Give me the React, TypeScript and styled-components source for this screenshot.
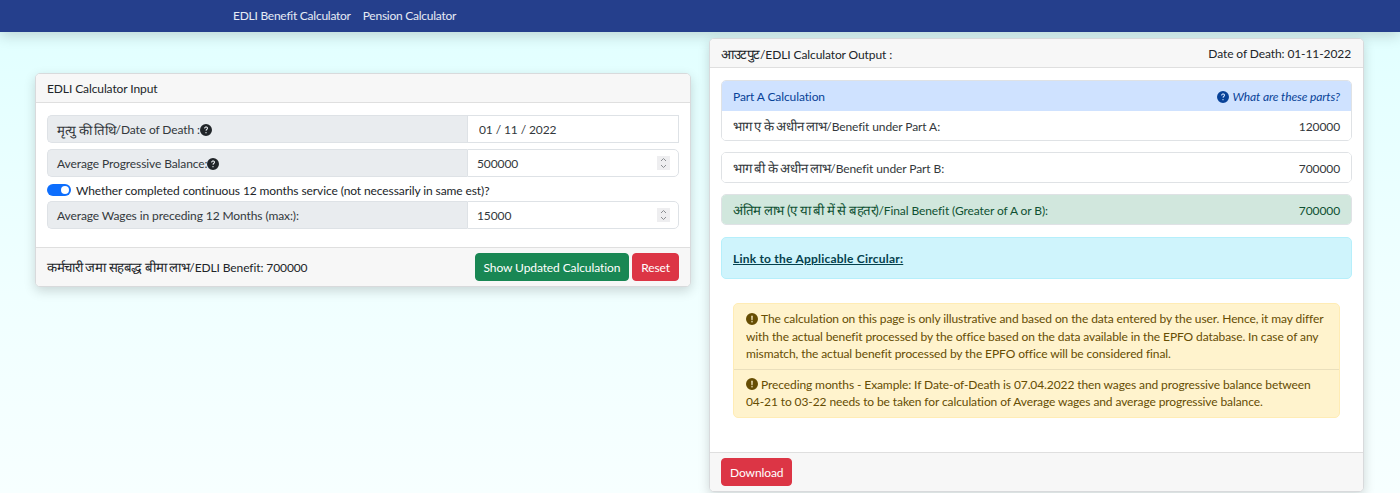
import styled, { createGlobalStyle } from 'styled-components';

const GlobalStyle = createGlobalStyle`
  html, body { margin: 0; padding: 0; }
  body {
    height: 493px;
    overflow: hidden;
    background: linear-gradient(180deg, #e0ffff 0%, #f0ffff 60%, #f7ffff 100%);
    font-family: Lato, Roboto, sans-serif;
    font-size: 12px;
    letter-spacing: -0.1px;
    color: #212529;
  }
  * { box-sizing: border-box; }
`;

const Nav = styled.nav`
  height: 32px;
  background: #253f8c;
  box-shadow: 0 4px 14px rgba(0, 0, 0, 0.16);
  display: flex;
  align-items: center;
  gap: 12px;
  padding: 0 0 1px 233px;
`;

const NavLink = styled.a`
  color: #e6ebf5;
  letter-spacing: -0.25px;
`;

const Columns = styled.main`
  display: grid;
  grid-template-columns: 656px 655px;
  gap: 18px;
  padding: 6px 36px 0 35px;
  align-items: start;
`;

const Card = styled.section<{ $top?: number }>`
  margin-top: ${(p) => p.$top ?? 0}px;
  background: #fff;
  border: 1px solid #d8dadc;
  border-radius: 5px;
  box-shadow: 0 4px 12px rgba(0, 0, 0, 0.16);
  overflow: hidden;
`;

const CardHeader = styled.header`
  height: 29px;
  background: #f7f7f7;
  border-bottom: 1px solid #dfdfdf;
  display: flex;
  align-items: center;
  justify-content: space-between;
  padding: 1px 12px 0 11px;
`;

const InputBody = styled.div`
  padding: 12px 11px 18px;
  display: flex;
  flex-direction: column;
`;

const InputGroup = styled.div<{ $gap?: number }>`
  display: grid;
  grid-template-columns: 420px 1fr;
  height: 28px;
  margin-bottom: ${(p) => p.$gap ?? 0}px;
`;

const GroupLabel = styled.label`
  background: #e9ecef;
  border: 1px solid #dee2e6;
  border-right: none;
  border-radius: 5px 0 0 5px;
  display: flex;
  align-items: center;
  padding: 1px 0 0 9px;
  color: #33383c;
`;

const Hindi = styled.span`
  font-size: 13.2px;
  letter-spacing: -0.4px;
`;

const FieldWrap = styled.div`
  position: relative;
`;

const Field = styled.input<{ $square?: boolean }>`
  width: 100%;
  height: 100%;
  min-width: 0;
  border: 1px solid #dee2e6;
  border-radius: ${(p) => (p.$square ? '0' : '0 5px 5px 0')};
  padding: 1px 9px 0;
  padding-left: ${(p) => (p.$square ? 11 : 9)}px;
  font: inherit;
  letter-spacing: inherit;
  color: #33383c;
  background: #fff;
  outline: none;
  appearance: textfield;
  &::-webkit-inner-spin-button {
    appearance: none;
  }
`;

const Spinner = styled.svg`
  position: absolute;
  right: 9px;
  top: 7px;
  width: 13px;
  height: 14px;
  background: #eeeef0;
`;

const SwitchRow = styled.div`
  display: flex;
  align-items: center;
  gap: 5px;
  height: 24px;
  padding-top: 2px;
`;

const Switch = styled.span`
  width: 24px;
  height: 12px;
  border-radius: 6px;
  background: #0d6efd;
  display: flex;
  justify-content: flex-end;
  align-items: center;
  padding-right: 2px;
  &::after {
    content: '';
    width: 8px;
    height: 8px;
    border-radius: 50%;
    background: #fff;
  }
`;

const CardFooter = styled.footer`
  height: 39px;
  background: #f7f7f7;
  border-top: 1px solid #dfdfdf;
  display: flex;
  align-items: center;
  justify-content: space-between;
  padding: 0 11px;
`;

const ButtonRow = styled.div`
  display: flex;
  gap: 3px;
`;

const Button = styled.button<{ $tone: 'green' | 'red' }>`
  height: 28px;
  padding: 0 8px;
  border: 1px solid ${(p) => (p.$tone === 'green' ? '#198754' : '#dc3545')};
  border-radius: 4px;
  background: ${(p) => (p.$tone === 'green' ? '#198754' : '#dc3545')};
  color: #fff;
  font: inherit;
  letter-spacing: inherit;
`;

const OutputBody = styled.div`
  padding: 12px 11px 0;
  height: 384px;
`;

const ListBox = styled.div<{ $gap: number }>`
  border: 1px solid #dfe2e5;
  border-radius: 5px;
  margin-bottom: ${(p) => p.$gap}px;
  overflow: hidden;
`;

const Row = styled.div<{ $tone?: 'blue' | 'green' }>`
  height: ${(p) => (p.$tone === 'blue' ? 30 : 29)}px;
  display: flex;
  align-items: center;
  justify-content: space-between;
  padding: 1px 11px 0;
  background: ${(p) => (p.$tone === 'blue' ? '#cfe2ff' : p.$tone === 'green' ? '#d1e7dd' : '#fff')};
  color: ${(p) => (p.$tone === 'blue' ? '#084298' : p.$tone === 'green' ? '#0f5132' : '#33383c')};
`;

const Parts = styled.em`
  display: flex;
  align-items: center;
  gap: 3px;
`;

const LinkAlert = styled.div`
  height: 42px;
  background: #cff4fc;
  border: 1px solid #b6effb;
  border-radius: 5px;
  display: flex;
  align-items: center;
  padding: 0 11px;
  a {
    color: #04414d;
    font-weight: 700;
    letter-spacing: 0.22px;
    text-decoration: underline;
  }
`;

const Notice = styled.div`
  margin: 24px 12px 0;
  background: #fff3cd;
  border: 1px solid #ffecb5;
  border-radius: 5px;
  color: #664d03;
  line-height: 17.5px;
`;

const NoticeItem = styled.p`
  margin: 0;
  padding: 6px 12px 6px;
  & + & {
    border-top: 1px solid #eadfbc;
  }
`;

const HelpIcon = ({ size = 12, color = '#212529' }: { size?: number; color?: string }) => (
  <svg width={size} height={size} viewBox="0 0 16 16" fill={color}>
    <path d="M16 8A8 8 0 1 1 0 8a8 8 0 0 1 16 0zM5.5 5.9h1.3c.1-.8.6-1.3 1.3-1.3.7 0 1.2.4 1.2 1 0 .5-.3.8-.8 1.2-.7.5-1 1-1 1.8v.4h1.3v-.3c0-.5.2-.8.8-1.2.7-.5 1.1-1.1 1.1-2 0-1.3-1.1-2.1-2.5-2.1-1.6 0-2.6.9-2.7 2.5zM8 12.4a.9.9 0 1 0 0-1.8.9.9 0 0 0 0 1.8z" />
  </svg>
);

const WarnIcon = () => (
  <svg width={12} height={12} viewBox="0 0 16 16" fill="#664d03" style={{ verticalAlign: '-1.5px', marginRight: 3 }}>
    <path d="M16 8A8 8 0 1 1 0 8a8 8 0 0 1 16 0zM7 3.5l.3 6h1.4l.3-6H7zm1 9a1 1 0 1 0 0-2 1 1 0 0 0 0 2z" />
  </svg>
);

const NumberField = ({ value }: { value: string }) => (
  <FieldWrap>
    <Field type="number" readOnly value={value} />
    <Spinner viewBox="0 0 13 14" fill="none" stroke="#8b8e92" strokeWidth="1">
      <path d="M4 5l2.5-2.5L9 5M4 9l2.5 2.5L9 9" />
    </Spinner>
  </FieldWrap>
);

export default function App() {
  return (
    <>
      <GlobalStyle />
      <Nav>
        <NavLink>EDLI Benefit Calculator</NavLink>
        <NavLink>Pension Calculator</NavLink>
      </Nav>
      <Columns>
        <Card $top={35}>
          <CardHeader>EDLI Calculator Input</CardHeader>
          <InputBody>
            <InputGroup $gap={6}>
              <GroupLabel>
                <Hindi>मृत्यु की तिथि</Hindi>/Date of Death :<HelpIcon />
              </GroupLabel>
              <Field $square readOnly value="01 / 11 / 2022" />
            </InputGroup>
            <InputGroup>
              <GroupLabel>
                Average Progressive Balance:<HelpIcon />
              </GroupLabel>
              <NumberField value="500000" />
            </InputGroup>
            <SwitchRow>
              <Switch />
              Whether completed continuous 12 months service (not necessarily in same est)?
            </SwitchRow>
            <InputGroup>
              <GroupLabel>Average Wages in preceding 12 Months (max:):</GroupLabel>
              <NumberField value="15000" />
            </InputGroup>
          </InputBody>
          <CardFooter>
            <span>
              <Hindi>कर्मचारी जमा सहबद्ध बीमा लाभ</Hindi>/EDLI Benefit: 700000
            </span>
            <ButtonRow>
              <Button $tone="green">Show Updated Calculation</Button>
              <Button $tone="red">Reset</Button>
            </ButtonRow>
          </CardFooter>
        </Card>
        <Card>
          <CardHeader>
            <span>
              <Hindi>आउटपुट</Hindi>/EDLI Calculator Output :
            </span>
            <span>Date of Death: 01-11-2022</span>
          </CardHeader>
          <OutputBody>
            <ListBox $gap={11}>
              <Row $tone="blue">
                Part A Calculation
                <Parts>
                  <HelpIcon color="#084298" />
                  What are these parts?
                </Parts>
              </Row>
              <Row>
                <span>
                  <Hindi>भाग ए के अधीन लाभ</Hindi>/Benefit under Part A:
                </span>
                120000
              </Row>
            </ListBox>
            <ListBox $gap={11}>
              <Row>
                <span>
                  <Hindi>भाग बी के अधीन लाभ</Hindi>/Benefit under Part B:
                </span>
                700000
              </Row>
            </ListBox>
            <ListBox $gap={12}>
              <Row $tone="green">
                <span>
                  <Hindi>अंतिम लाभ (ए या बी में से बहतर)</Hindi>/Final Benefit (Greater of A or B):
                </span>
                700000
              </Row>
            </ListBox>
            <LinkAlert>
              <a>Link to the Applicable Circular:</a>
            </LinkAlert>
            <Notice>
              <NoticeItem>
                <WarnIcon />
                The calculation on this page is only illustrative and based on the data entered by the user. Hence, it may differ with the actual benefit processed by the office based on the data available in the EPFO database. In case of any mismatch, the actual benefit processed by the EPFO office will be considered final.
              </NoticeItem>
              <NoticeItem>
                <WarnIcon />
                Preceding months - Example: If Date-of-Death is 07.04.2022 then wages and progressive balance between 04-21 to 03-22 needs to be taken for calculation of Average wages and average progressive balance.
              </NoticeItem>
            </Notice>
          </OutputBody>
          <CardFooter>
            <Button $tone="red">Download</Button>
          </CardFooter>
        </Card>
      </Columns>
    </>
  );
}
